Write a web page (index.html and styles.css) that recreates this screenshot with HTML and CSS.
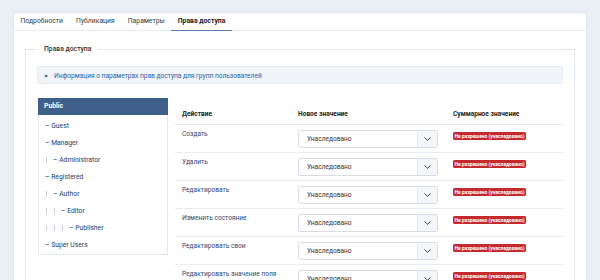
FILE: index.html
```html
<!DOCTYPE html>
<html lang="ru">
<head>
<meta charset="utf-8">
<link rel="stylesheet" href="styles.css">
</head>
<body>
<div class="card">
  <div class="tabs">
    <div class="tab">Подробности</div>
    <div class="tab">Публикация</div>
    <div class="tab">Параметры</div>
    <div class="tab active">Права доступа</div>
  </div>
  <div class="content">
    <fieldset class="perm">
      <legend>Права доступа</legend>
      <div class="info"><span class="arrow">&#9654;</span>Информация о параметрах прав доступа для групп пользователей</div>
      <div class="perm-body">
        <div class="tree">
          <div class="tree-head">Public</div>
          <ul class="tree-list">
            <li>– Guest</li>
            <li>– Manager</li>
            <li><span class="lvl"></span>– Administrator</li>
            <li>– Registered</li>
            <li><span class="lvl"></span>– Author</li>
            <li><span class="lvl"></span><span class="lvl"></span>– Editor</li>
            <li><span class="lvl"></span><span class="lvl"></span><span class="lvl"></span>– Publisher</li>
            <li>– Super Users</li>
          </ul>
        </div>
        <div class="acl">
          <div class="row head">
            <div>Действие</div>
            <div>Новое значение</div>
            <div>Суммарное значение</div>
          </div>
          <div class="row">
            <div class="label">Создать</div>
            <div class="cell"><div class="select"><span class="val">Унаследовано</span><span class="chev"><svg width="7" height="4" viewBox="0 0 7 4"><polyline points="0.5,0.5 3.5,3.3 6.5,0.5" fill="none" stroke="#333" stroke-width="0.9"/></svg></span></div></div>
            <div class="cell"><span class="badge">Не разрешено (унаследовано)</span></div>
          </div>
          <div class="row">
            <div class="label">Удалить</div>
            <div class="cell"><div class="select"><span class="val">Унаследовано</span><span class="chev"><svg width="7" height="4" viewBox="0 0 7 4"><polyline points="0.5,0.5 3.5,3.3 6.5,0.5" fill="none" stroke="#333" stroke-width="0.9"/></svg></span></div></div>
            <div class="cell"><span class="badge">Не разрешено (унаследовано)</span></div>
          </div>
          <div class="row">
            <div class="label">Редактировать</div>
            <div class="cell"><div class="select"><span class="val">Унаследовано</span><span class="chev"><svg width="7" height="4" viewBox="0 0 7 4"><polyline points="0.5,0.5 3.5,3.3 6.5,0.5" fill="none" stroke="#333" stroke-width="0.9"/></svg></span></div></div>
            <div class="cell"><span class="badge">Не разрешено (унаследовано)</span></div>
          </div>
          <div class="row">
            <div class="label">Изменить состояние</div>
            <div class="cell"><div class="select"><span class="val">Унаследовано</span><span class="chev"><svg width="7" height="4" viewBox="0 0 7 4"><polyline points="0.5,0.5 3.5,3.3 6.5,0.5" fill="none" stroke="#333" stroke-width="0.9"/></svg></span></div></div>
            <div class="cell"><span class="badge">Не разрешено (унаследовано)</span></div>
          </div>
          <div class="row">
            <div class="label">Редактировать свои</div>
            <div class="cell"><div class="select"><span class="val">Унаследовано</span><span class="chev"><svg width="7" height="4" viewBox="0 0 7 4"><polyline points="0.5,0.5 3.5,3.3 6.5,0.5" fill="none" stroke="#333" stroke-width="0.9"/></svg></span></div></div>
            <div class="cell"><span class="badge">Не разрешено (унаследовано)</span></div>
          </div>
          <div class="row">
            <div class="label">Редактировать значение поля</div>
            <div class="cell"><div class="select"><span class="val">Унаследовано</span><span class="chev"><svg width="7" height="4" viewBox="0 0 7 4"><polyline points="0.5,0.5 3.5,3.3 6.5,0.5" fill="none" stroke="#333" stroke-width="0.9"/></svg></span></div></div>
            <div class="cell"><span class="badge">Не разрешено (унаследовано)</span></div>
          </div>
        </div>
      </div>
    </fieldset>
  </div>
</div>
</body>
</html>
```
FILE: styles.css
```css
* { box-sizing: border-box; }
html, body { margin: 0; padding: 0; }
body {
  background: #eaeff5;
  font-family: Roboto, "Liberation Sans", sans-serif;
  font-size: 7px;
  color: #333;
  padding: 12px 13px 0;
  height: 280px;
  overflow: hidden;
}
.card {
  background: #fff;
  border: 1px solid #e1e7ee;
  border-radius: 2px;
  height: 400px;
}
.tabs {
  display: flex;
  height: 18px;
  border-bottom: 1px solid #e6ebf2;
}
.tab {
  padding: 0 6.5px;
  height: 17px;
  line-height: 17px;
  font-size: 6.8px;
  color: #3b3b3b;
  white-space: nowrap;
}
.tab.active {
  font-weight: 700;
  color: #222;
  border-bottom: 1.5px solid #5a7fb0;
  height: 18px;
}
.content { padding: 0 11px; }
.perm {
  margin: 13px 0 0;
  padding: 12px 11px 0;
  border: 1px solid #e3e8ef;
  min-width: 0;
  height: 400px;
}
.perm legend {
  padding: 0 7px;
  margin-left: 0;
  font-size: 6.8px;
  line-height: 10px;
  font-weight: 500;
  color: #333;
}
.info {
  height: 18px;
  line-height: 17px;
  background: #f1f4f8;
  border: 1px solid #e7ecf2;
  border-radius: 2px;
  color: #2c63ab;
  font-size: 6.6px;
  padding-left: 7px;
  white-space: nowrap;
}
.arrow {
  display: inline-block;
  font-size: 4px;
  color: #33527c;
  width: 9px;
  vertical-align: 1px;
}
.perm-body {
  display: flex;
  gap: 7px;
  margin-top: 14px;
}
.tree {
  width: 130px;
  margin-left: 1px;
  border: 1px solid #e4e9ef;
  align-self: flex-start;
  font-size: 6.8px;
}
.tree-head {
  height: 17px;
  line-height: 17px;
  background: #3e5f89;
  color: #fff;
  font-weight: 700;
  padding-left: 6px;
  margin: -1px -1px 0;
}
.tree-list {
  list-style: none;
  margin: 0;
  padding: 2px 0 1px;
}
.tree-list li {
  height: 17px;
  padding-left: 6px;
  color: #23416a;
  white-space: nowrap;
  display: flex;
  align-items: center;
}
.lvl {
  display: inline-block;
  width: 8px;
  height: 6px;
  border-left: 1px dashed #c9cfd7;
  margin-left: 1px;
  margin-right: -1px;
}
.acl { flex: 1; margin-top: -1px; }
.row {
  display: grid;
  grid-template-columns: 116px 155px 116px;
  height: 28px;
  border-bottom: 1px solid #e8ecf1;
}
.row > div { padding: 4.5px 7px 0; }
.row.head > div {
  padding: 0 7px 6px;
  align-self: end;
  font-weight: 700;
  color: #222;
  font-size: 6.6px;
  line-height: 8px;
}
.row.head { border-bottom: 1px solid #e3e8ee; }
.label {
  color: #2d4a72;
  font-size: 6.6px;
  line-height: 8px;
  white-space: nowrap;
}
.select {
  width: 140px;
  height: 18px;
  border: 1px solid #d6dde6;
  border-radius: 2px;
  display: flex;
  align-items: stretch;
  background: #fff;
}
.val {
  flex: 1;
  padding-left: 8px;
  line-height: 16px;
  font-size: 6.6px;
  color: #333;
}
.chev {
  width: 20px;
  border-left: 1px solid #e3e8ef;
  background: #f4f6f9;
  display: flex;
  align-items: center;
  justify-content: center;
}
.badge {
  display: inline-block;
  margin-top: 2px;
  height: 8px;
  line-height: 8px;
  padding: 0 1.5px;
  background: #c6292b;
  color: #fff;
  font-size: 4.9px;
  font-weight: 700;
  border-radius: 1.5px;
  white-space: nowrap;
}
```
